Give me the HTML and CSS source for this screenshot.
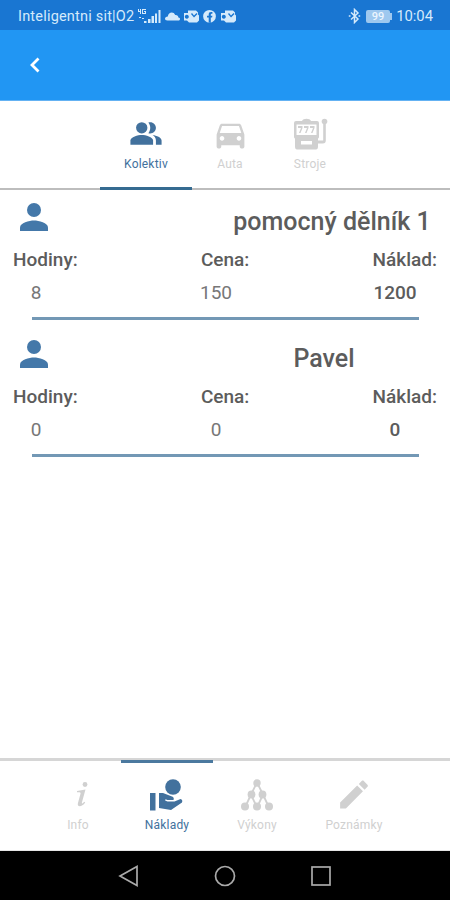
FILE: index.html
```html
<!DOCTYPE html>
<html lang="cs">
<head>
<meta charset="utf-8">
<title>Náklady</title>
<link rel="stylesheet" href="styles.css">
</head>
<body>
<div class="screen">
  <div class="status">
    <span class="carrier">Inteligentni sit|O2</span>
    <svg class="status-icons" width="100" height="18" viewBox="0 0 100 18" fill="currentColor">
      <path d="M1 2h1v2h1V2h1v5H3V5H1zM5 2h4v1H6v3h2V5H7V4h2v3H5zM2 10h2v1H2zM5 11h2v1H5z"/>
      <path d="M7 14h2.500v2H7zM11 12h2.500v4H11zM14.500 9h2.500v7h-2.500zM18 6.500h2v9.500h-2zM21.500 3h2v13h-2z"/>
      <path d="M30.500 13.500c-3.400 0-3.200-4 .3-4 .5-4.500 5.800-5.500 7.400-1.500 2.200-.2 3 1.200 3.200 2.500 2.200.2 2.200 3 0 3z"/>
      <g id="mail"><path fill-rule="evenodd" d="M51 3.500h8l2 2v2l1 1v5l-2 2h-8l-2-2h-3V6h4zM49.800 7.700a2 2 0 1 0 .01 0zM54 7l3 3.500L60.500 7l-1-.9L57 8.500 55 6z"/></g>
      <path fill-rule="evenodd" d="M72.500 2.900a6.400 6.400 0 1 0 0 12.800 6.400 6.400 0 1 0 0-12.800zM71.700 15.500v-5H70V8.700h1.700V7.500c0-2 1-2.800 3.700-2.400v1.600c-1.200-.1-1.600.1-1.600.9v1.100h1.600l-.3 1.800h-1.300v5z"/>
      <use href="#mail" x="37"/>
    </svg>
    <svg class="bluetooth" width="13" height="16" viewBox="0 0 13 16" fill="none" stroke="currentColor" stroke-width="1.500">
      <path d="M3 4.500l7 6.500-3.500 3.500v-13L10 5l-7 6.500"/><path d="M.8 8h1.700M10.500 8h1.700"/>
    </svg>
    <span class="battery">99</span>
    <span class="clock">10:04</span>
  </div>

  <header class="appbar">
    <svg width="12" height="16" viewBox="0 0 12 16" fill="none" stroke="#fff" stroke-width="2.800"><path d="M10.500 1.500L4 8l6.500 6.500"/></svg>
  </header>

  <nav class="tabs">
    <div class="tab active">
      <svg class="people" width="34" height="34" viewBox="0 0 24 24" fill="currentColor"><path d="M16.670 13.130C18.040 14.060 19 15.320 19 17v3h4v-3c0-2.180-3.570-3.470-6.330-3.870zM15 12c2.210 0 4-1.790 4-4s-1.790-4-4-4c-.47 0-.91.1-1.330.24C14.500 5.270 15 6.580 15 8s-.5 2.730-1.330 3.760c.42.14.86.24 1.330.24z"/><circle cx="9" cy="8" r="4"/><path d="M9 13c-2.670 0-8 1.340-8 4v3h16v-3c0-2.660-5.330-4-8-4z"/></svg>
      <span>Kolektiv</span>
    </div>
    <div class="tab">
      <svg width="37" height="37" viewBox="0 0 24 24" fill="currentColor"><path d="M18.920 6.010C18.720 5.420 18.160 5 17.500 5h-11c-.66 0-1.210.42-1.420 1.010L3 12v8c0 .55.45 1 1 1h1c.55 0 1-.45 1-1v-1h12v1c0 .55.45 1 1 1h1c.55 0 1-.45 1-1v-8l-2.080-5.990zM6.500 16c-.83 0-1.500-.67-1.500-1.500S5.670 13 6.500 13s1.500.67 1.500 1.500S7.330 16 6.500 16zm11 0c-.83 0-1.500-.67-1.500-1.500s.67-1.500 1.500-1.500 1.500.67 1.500 1.500-.67 1.500-1.500 1.500zM5 11l1.500-4.500h11L19 11H5z"/></svg>
      <span>Auta</span>
    </div>
    <div class="tab">
      <svg width="36" height="34" viewBox="0 0 36 34" fill="currentColor"><path fill-rule="evenodd" d="M10 3.500C11 .5 18 .5 19 3.500h6q2 0 2 2V19q0 2-1 2v8q0 3-2 3H5q-2 0-2-3v-8q-1 0-1-2V5.500q0-2 2-2zM4.500 7v10.500h20V7zM9 23.500v3.500h11v-3.500z"/><path d="M6 8.500h4.500v2l-2 5H7l2-5H6zM12 8.500h4.500v2l-2 5H13l2-5h-3zM18 8.500h4.500v2l-2 5H19l2-5h-3z"/><circle cx="32.500" cy="4" r="2.800"/><path d="M31.200 5h2.600v18q0 3-3 3H26v-3h5.200z"/></svg>
      <span>Stroje</span>
    </div>
  </nav>

  <main class="list">
    <section class="card">
      <div class="head">
        <svg width="42" height="42" viewBox="0 0 24 24" fill="currentColor"><circle cx="12" cy="8" r="4"/><path d="M12 14c-2.670 0-8 1.340-8 4v2h16v-2c0-2.660-5.330-4-8-4z"/></svg>
        <h2>pomocný dělník 1</h2>
      </div>
      <div class="labels"><span>Hodiny:</span><span>Cena:</span><span>Náklad:</span></div>
      <div class="values"><span>8</span><span>150</span><b>1200</b></div>
    </section>
    <section class="card">
      <div class="head short">
        <svg width="42" height="42" viewBox="0 0 24 24" fill="currentColor"><circle cx="12" cy="8" r="4"/><path d="M12 14c-2.670 0-8 1.340-8 4v2h16v-2c0-2.660-5.330-4-8-4z"/></svg>
        <h2>Pavel</h2>
      </div>
      <div class="labels"><span>Hodiny:</span><span>Cena:</span><span>Náklad:</span></div>
      <div class="values"><span>0</span><span>0</span><b>0</b></div>
    </section>
  </main>

  <nav class="bottom">
    <div class="item">
      <svg width="36" height="36" viewBox="0 0 36 36" fill="currentColor"><circle cx="25" cy="8" r="2.400"/><path d="M17 14.500l8.500-1.500-3.600 13c-.3 1.300.4 1.500 2.400-.8l.9.800c-3.300 4.800-8.300 4.800-7.300.7l2.600-9.500c.3-1.200-.3-1.500-3.500-1.400z"/></svg>
      <span>Info</span>
    </div>
    <div class="item active">
      <svg width="36" height="36" viewBox="0 0 36 36" fill="currentColor"><circle cx="24" cy="10.500" r="7.800"/><path d="M1 16.500h5.500V34H1zM10 16.500h4l9 3.500q2.500 1 1.500 3.500h-6l-2-.8-.4 1.200 2.400 1.100h7l6-2.500q2.500.5 1.500 3.500L22 33.500 10 31.500z"/></svg>
      <span>Náklady</span>
    </div>
    <div class="item">
      <svg width="36" height="36" viewBox="0 0 36 36" fill="currentColor"><path d="M18 6L12 18 6 31M18 6l6 12 6 13M12 18l6 13M24 18l-6 13" fill="none" stroke="currentColor" stroke-width="1.800"/><circle cx="18" cy="6.500" r="3.700"/><circle cx="12.500" cy="18" r="3.900"/><circle cx="23.500" cy="18" r="3.900"/><circle cx="6" cy="30" r="4"/><circle cx="18" cy="30" r="4"/><circle cx="30" cy="30" r="4"/></svg>
      <span>Výkony</span>
    </div>
    <div class="item">
      <svg width="38" height="38" viewBox="0 0 24 24" fill="currentColor"><path d="M3 17.250V21h3.750L17.810 9.940l-3.750-3.750L3 17.250zM20.710 7.040c.39-.39.39-1.020 0-1.410l-2.340-2.340c-.39-.39-1.020-.39-1.410 0l-1.830 1.830 3.750 3.750 1.830-1.830z"/></svg>
      <span>Poznámky</span>
    </div>
  </nav>

  <div class="system">
    <svg width="22" height="22" viewBox="0 0 22 22"><path d="M19 1.500v19L2 11z"/></svg>
    <svg width="22" height="22" viewBox="0 0 22 22"><circle cx="11" cy="11" r="9.500"/></svg>
    <svg width="22" height="22" viewBox="0 0 22 22"><rect x="2" y="2" width="18" height="18"/></svg>
  </div>
</div>
</body>
</html>
```

FILE: styles.css
```css
* { box-sizing: border-box; }
body { margin: 0; font-family: Roboto, "Liberation Sans", sans-serif; background: #fff; }
svg { display: block; flex: none; }
.screen { width: 450px; height: 900px; display: flex; flex-direction: column; overflow: hidden; }

.status { height: 30px; padding: 2px 17px 0 18px; display: flex; align-items: center; background: #1976d2; color: #d5eafb; font-size: 14px; }
.carrier { width: 119px; white-space: nowrap; font-size: 14.5px; letter-spacing: 0.2px; }
.status-icons { margin-top: -1px; }
.bluetooth { margin-left: 111px; }
.battery { position: relative; width: 24px; height: 13px; margin-left: 5px; border-radius: 2px; background: #9ec8ef; color: #edf6fe; font-size: 11px; line-height: 13px; text-align: center; font-weight: 500; }
.battery::after { content: ""; position: absolute; left: 24px; top: 3px; width: 2px; height: 7px; background: #9ec8ef; }
.clock { margin-left: auto; font-size: 14.8px; }

.appbar { height: 71px; padding-left: 28px; display: flex; align-items: center; background: #2196f3; border-bottom: 1px solid #64b2f3; }

.tabs { height: 89px; padding-left: 100px; display: grid; grid-template-columns: 92px 76px 84px; border-bottom: 2px solid #bdbdbd; }
.tab, .item { display: flex; flex-direction: column; align-items: center; color: #d0d0d0; font-size: 12px; letter-spacing: 0.2px; }
.tab { height: 89px; padding-top: 15px; }
.tab svg { height: 37px; }
.tab .people { height: 35px; margin-bottom: 2px; }
.tab span { margin-top: 3px; line-height: 16px; }
.active { color: #42719d; }
.tab.active { border-bottom: 3px solid #356b91; }

.list { flex: 1; }
.card { height: 137px; color: #5c5c5c; }
.card::after { content: ""; display: block; height: 3px; margin: 11px 31px 0 32px; background: #7398b5; }
.head { height: 55px; padding: 6px 0 0 13px; display: flex; color: #4478a9; }
.head h2 { flex: 1; margin: 9px 18px 0 177px; font-size: 25px; line-height: 34px; font-weight: 500; color: #5c5c5c; text-align: center; white-space: nowrap; }
.head.short h2 { margin-right: 34px; }
.labels { height: 28px; padding: 0 13px; display: flex; justify-content: space-between; font-size: 19px; line-height: 29px; font-weight: 500; }
.values { height: 28px; margin-top: 5px; padding: 0 33px 0 13px; display: flex; justify-content: space-between; font-size: 19px; line-height: 29px; }
.values span, .values b { width: 46px; text-align: center; }
.values b { width: 44px; font-weight: 500; }
.values span { color: #777; }

.bottom { height: 93px; padding-left: 35px; display: grid; grid-template-columns: 86px 92px 88px 106px; border-top: 3px solid #d6d6d6; border-bottom: 1px solid #e6e6e6; }
.item { margin-top: -1px; padding-top: 13px; border-top: 3px solid transparent; }
.item svg { height: 37px; }
.item span { margin-top: 4px; line-height: 16px; }
.item.active { border-top-color: #4b799f; }

.system { height: 49px; padding: 0 118px; display: flex; align-items: center; justify-content: space-between; background: #000; }
.system svg { fill: none; stroke: #aaa; stroke-width: 1.7; }
```
